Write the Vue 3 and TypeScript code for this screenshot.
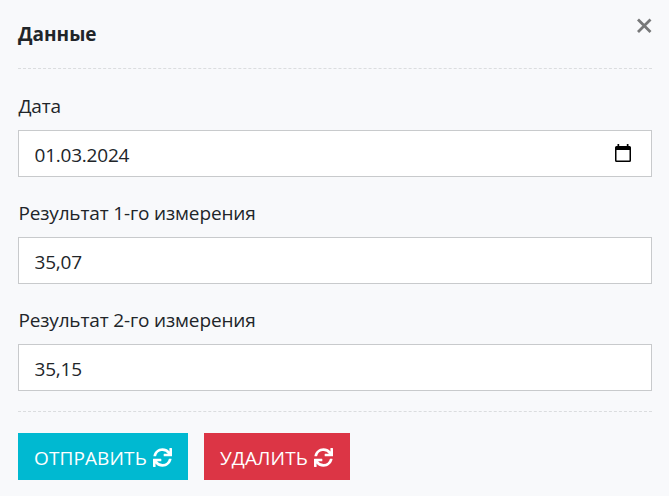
<script setup lang="ts">
import { ref } from 'vue'

const date = ref('01.03.2024')
const first = ref('35,07')
const second = ref('35,15')

const syncPath =
  'M440.65 12.57l4 82.77A247.16 247.16 0 0 0 255.83 8C134.73 8 33.91 94.92 12.29 209.82A12 12 0 0 0 24.09 224h49.05a12 12 0 0 0 11.67-9.26 175.91 175.91 0 0 1 317-56.94l-101.46-4.86a12 12 0 0 0-12.57 12v47.41a12 12 0 0 0 12 12H500a12 12 0 0 0 12-12V12a12 12 0 0 0-12-12h-47.37a12 12 0 0 0-11.98 12.57zM255.83 432a175.61 175.61 0 0 1-146-77.8l101.8 4.87a12 12 0 0 0 12.57-12v-47.4a12 12 0 0 0-12-12H12a12 12 0 0 0-12 12V500a12 12 0 0 0 12 12h47.35a12 12 0 0 0 12-12.6l-4.15-82.57A247.17 247.17 0 0 0 255.83 504c121.11 0 221.93-86.92 243.55-201.82a12 12 0 0 0-11.8-14.18h-49.05a12 12 0 0 0-11.67 9.26A175.86 175.86 0 0 1 255.83 432z'
</script>

<template>
  <form class="modal" @submit.prevent>
    <header class="header">
      <h5 class="title">Данные</h5>
      <button type="button" class="close" aria-label="Закрыть">
        <svg width="16" height="16" viewBox="0 0 16 16">
          <path d="M2 1.5L14.5 14M14.5 1.5L2 14" fill="none" stroke="#777879" stroke-width="2.8" />
        </svg>
      </button>
    </header>
    <div class="body">
      <div class="group">
        <label class="label" for="date">Дата</label>
        <div class="control">
          <input id="date" v-model="date" class="input" type="text" />
          <svg class="calendar" width="16" height="19" viewBox="0 0 16 19">
            <path
              fill="#000"
              fill-rule="evenodd"
              d="M2.5 0H4.2V2H11.8V0H13.5V2H14.5Q16 2 16 3.5V16.5Q16 18 14.5 18H1.5Q0 18 0 16.5V3.5Q0 2 1.5 2H2.5ZM1.5 6V16.6H14.5V6Z"
            />
          </svg>
        </div>
      </div>
      <div class="group">
        <label class="label" for="first">Результат 1-го измерения</label>
        <div class="control"><input id="first" v-model="first" class="input" type="text" /></div>
      </div>
      <div class="group">
        <label class="label" for="second">Результат 2-го измерения</label>
        <div class="control"><input id="second" v-model="second" class="input" type="text" /></div>
      </div>
    </div>
    <footer class="footer">
      <button type="submit" class="btn send">
        <span>ОТПРАВИТЬ</span>
        <svg class="sync" viewBox="0 0 512 512"><path fill="currentColor" :d="syncPath" /></svg>
      </button>
      <button type="button" class="btn remove">
        <span>УДАЛИТЬ</span>
        <svg class="sync" viewBox="0 0 512 512"><path fill="currentColor" :d="syncPath" /></svg>
      </button>
    </footer>
  </form>
</template>

<style>
body {
  background: #f8f9fb;
}
</style>

<style scoped>
.modal {
  box-sizing: border-box;
  height: 496px;
  padding: 0 17px 0 18px;
  background: #f8f9fb;
  color: #212529;
  font: 370 19px/28px 'Open Sans', 'Noto Sans', sans-serif;
}
.header {
  display: flex;
  justify-content: space-between;
  height: 68px;
  border-bottom: 1px dashed #dbdddf;
}
.title {
  margin: 20px 0 0;
  font-size: 19px;
  font-weight: 700;
  line-height: 28px;
}
.close {
  width: 16px;
  height: 16px;
  margin: 18px 0 0;
  padding: 0;
  border: 0;
  background: none;
}
.close svg {
  display: block;
}
.body {
  padding: 23px 0 20px;
}
.group + .group {
  margin-top: 22px;
}
.label {
  display: block;
  height: 28px;
  margin-bottom: 10px;
  padding-left: 0.4px;
  letter-spacing: -0.14px;
  white-space: nowrap;
}
.control {
  display: flex;
  align-items: center;
  box-sizing: border-box;
  height: 47px;
  padding: 0 20px 0 15.5px;
  border: 1px solid #c8cacc;
  background: #fff;
}
.input {
  flex: 1;
  box-sizing: border-box;
  min-width: 0;
  height: 45px;
  padding: 3px 0 0;
  border: 0;
  outline: 0;
  background: transparent;
  color: inherit;
  font: inherit;
  letter-spacing: -0.22px;
}
.footer {
  display: flex;
  gap: 16px;
  padding-top: 21px;
  border-top: 1px dashed #dbdddf;
}
.btn {
  display: flex;
  align-items: center;
  justify-content: space-between;
  box-sizing: border-box;
  height: 47px;
  padding: 2px 16px 0;
  border: 0;
  color: #fff;
  font: inherit;
  letter-spacing: 0.12px;
  white-space: nowrap;
}
.send {
  width: 170px;
  background: #00b9d1;
}
.remove {
  width: 146px;
  padding-right: 17px;
  background: #dc3545;
}
.sync {
  width: 19px;
  height: 19px;
}
</style>
